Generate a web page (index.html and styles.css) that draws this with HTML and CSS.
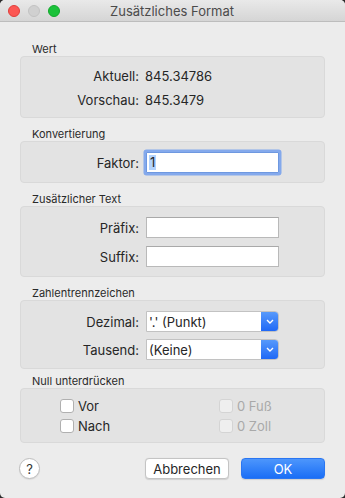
FILE: index.html
```html
<!DOCTYPE html>
<html lang="de">
<head>
  <meta charset="UTF-8" />
  <title>Zusätzliches Format</title>
  <link rel="stylesheet" href="styles.css">
</head>
<body>
  <div class="window">
    <div class="titlebar">
      <div class="lights">
        <span class="light red"></span>
        <span class="light grey"></span>
        <span class="light green"></span>
      </div>
      <div class="title">Zusätzliches Format</div>
    </div>

    <div class="content">
      <div class="group">
        <div class="group-label">Wert</div>
        <div class="box box-value">
          <div class="row"><span class="lbl">Aktuell:</span><span class="val">845.34786</span></div>
          <div class="row"><span class="lbl">Vorschau:</span><span class="val">845.3479</span></div>
        </div>
      </div>

      <div class="group">
        <div class="group-label">Konvertierung</div>
        <div class="box">
          <div class="row"><span class="lbl">Faktor:</span><div class="field focus"><span class="sel">1</span></div></div>
        </div>
      </div>

      <div class="group">
        <div class="group-label">Zusätzlicher Text</div>
        <div class="box">
          <div class="row"><span class="lbl">Präfix:</span><div class="field"></div></div>
          <div class="row"><span class="lbl">Suffix:</span><div class="field"></div></div>
        </div>
      </div>

      <div class="group group-tight">
        <div class="group-label">Zahlentrennzeichen</div>
        <div class="box box-pop">
          <div class="row"><span class="lbl">Dezimal:</span>
            <div class="popup"><span class="popup-text">'.' (Punkt)</span><span class="popup-arrow"><svg width="8" height="5" viewBox="0 0 8 5"><path d="M1 1 L4 4 L7 1" fill="none" stroke="#fff" stroke-width="1.4"/></svg></span></div>
          </div>
          <div class="row"><span class="lbl">Tausend:</span>
            <div class="popup"><span class="popup-text">(Keine)</span><span class="popup-arrow"><svg width="8" height="5" viewBox="0 0 8 5"><path d="M1 1 L4 4 L7 1" fill="none" stroke="#fff" stroke-width="1.4"/></svg></span></div>
          </div>
        </div>
      </div>

      <div class="group group-last">
        <div class="group-label">Null unterdrücken</div>
        <div class="box box-checks">
          <label class="check"><span class="cb"></span>Vor</label>
          <label class="check disabled"><span class="cb"></span>0 Fuß</label>
          <label class="check"><span class="cb"></span>Nach</label>
          <label class="check disabled"><span class="cb"></span>0 Zoll</label>
        </div>
      </div>

      <div class="buttons">
        <button class="help">?</button>
        <div class="spacer"></div>
        <button class="btn">Abbrechen</button>
        <button class="btn primary">OK</button>
      </div>
    </div>
  </div>
</body>
</html>
```

FILE: styles.css
```css
html, body {
  margin: 0; padding: 0; background: #2b2b2b;
  font-family: Inter, "Liberation Sans", sans-serif;
  color: #262626;
}
.window {
  width: 345px; height: 498px; background: #ececec;
  border-radius: 5px; overflow: hidden; box-sizing: border-box;
}
.titlebar {
  height: 21px; position: relative;
  background: linear-gradient(#e9e9e9, #d5d5d5);
  border-bottom: 1px solid #bdbdbd;
  display: flex; align-items: center; justify-content: center;
}
.lights {
  position: absolute; left: 8px; top: 5px;
  display: flex; gap: 8px;
}
.light {
  width: 12px; height: 12px; border-radius: 50%; box-sizing: border-box;
}
.light.red { background: #fc5753; border: 1px solid #df3e3b; }
.light.grey { background: #d0d0d0; border: 1px solid #c2c2c2; }
.light.green { background: #1bc23a; border: 1px solid #12a82c; }
.title {
  font-size: 13px; color: #4b4b4b; margin-left: -1px;
}
.content { padding: 20px 20px 0 20px; }

.group { margin-bottom: 9px; }
.group-tight { margin-bottom: 5px; }
.group-last { margin-bottom: 15px; }
.group-label {
  font-size: 11px; line-height: 14px; padding-left: 12px; color: #2a2a2a;
}
.box {
  background: #e3e3e3; border: 1px solid #d9d9d9; border-radius: 4px;
  padding: 10px 0 9px 0;
  display: flex; flex-direction: column; gap: 8px;
}
.box-value { padding: 7px 0 5px 0; gap: 0; }
.box-value .row { height: 24px; }
.box-pop { padding: 10px 0 8px 0; gap: 7px; }

.row {
  display: flex; align-items: center; height: 21px;
}
.lbl {
  width: 118px; text-align: right; font-size: 13px; padding-right: 7px;
}
.val { font-size: 13px; margin-left: -1px; }

.field {
  width: 133px; height: 21px; box-sizing: border-box;
  background: #fff; border: 1px solid #b9b9b9; border-top-color: #a9a9a9;
  font-size: 13px; display: flex; align-items: center; padding-left: 2px;
}
.field.focus {
  border: 1px solid #6e98e0;
  box-shadow: 0 0 0 2.5px #84a9ec;
  border-radius: 1px;
}
.sel { background: #b3d3fd; padding: 0 1px; line-height: 15px; }

.popup {
  width: 133px; height: 21px; box-sizing: border-box; display: flex;
  background: #fff; border: 1px solid #c2c2c2; border-radius: 0 4px 4px 0;
  font-size: 13px; overflow: hidden;
}
.popup-text { flex: 1; display: flex; align-items: center; padding-left: 2px; }
.popup-arrow {
  width: 18px; background: linear-gradient(#5a9cfb, #1c66f6);
  display: flex; align-items: center; justify-content: center;
  margin: -1px -1px -1px 0;
}

.box-checks {
  display: grid; grid-template-columns: 159px 80px;
  padding: 10px 0 9px 39px; column-gap: 0; row-gap: 6px;
}
.check {
  display: flex; align-items: center; gap: 4px; font-size: 13px; height: 14px;
}
.cb {
  width: 14px; height: 14px; box-sizing: border-box; background: #fff;
  border: 1px solid #b0b0b0; border-radius: 3px;
}
.check.disabled { color: #a9a9a9; }
.check.disabled .cb { background: #efefef; border-color: #d4d4d4; }

.buttons {
  display: flex; align-items: center; gap: 12px;
}
.spacer { flex: 1; }
.help {
  width: 21px; height: 21px; border-radius: 50%; padding: 0;
  background: #fff; border: 1px solid #bdbdbd; margin-left: -1px;
  font-family: inherit; font-size: 13px; color: #333;
  box-shadow: 0 1px 1px rgba(0,0,0,0.08);
}
.btn {
  width: 84px; height: 21px; padding: 0;
  background: #fff; border: 1px solid #c4c4c4; border-radius: 4px;
  font-family: inherit; font-size: 13px; color: #262626;
  box-shadow: 0 0.5px 1px rgba(0,0,0,0.12);
}
.btn.primary {
  background: linear-gradient(#4d96fc, #1a6ef6); border-color: #2a76f2;
  color: #fff;
}
```
